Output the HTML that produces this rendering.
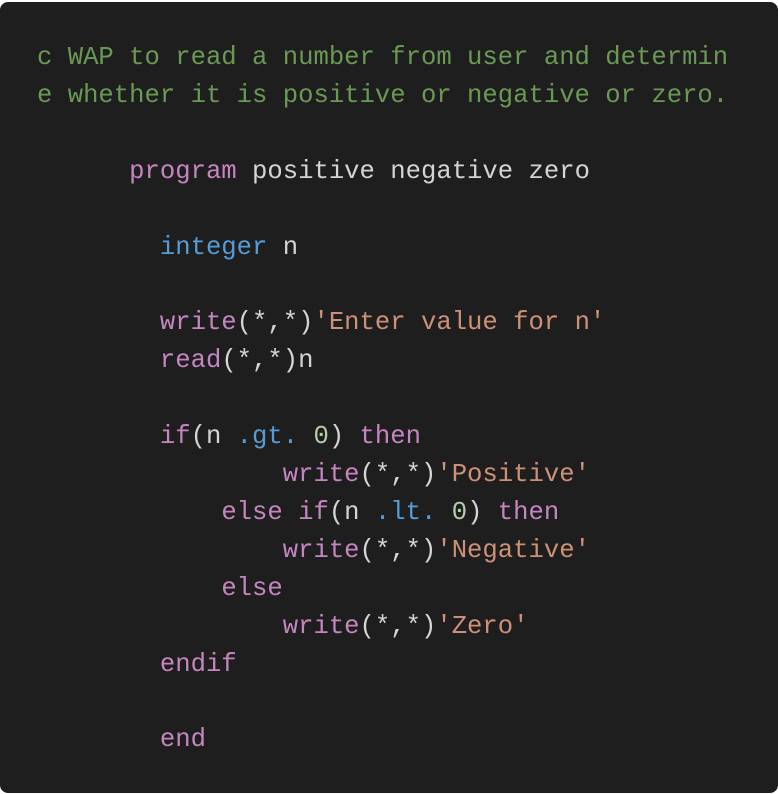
<!DOCTYPE html>
<html><head><style>
html,body{margin:0;padding:0;background:#fff;width:778px;height:794px;overflow:hidden}
.box{position:absolute;left:0;top:2px;width:778px;height:791px;background:#1e1e1e;border-radius:8px}
pre{position:absolute;left:37px;top:39px;margin:0;font-family:"Liberation Mono",monospace;font-size:25.6px;line-height:37.9px;color:#d4d4d4;white-space:pre}
.c{color:#6a9955}.k{color:#c586c0}.t{color:#569cd6}.s{color:#ce9178}.n{color:#b5cea8}
</style></head><body><div class="box"></div>
<pre><span class="c">c WAP to read a number from user and determin
e whether it is positive or negative or zero.</span>

      <span class="k">program</span> positive negative zero

        <span class="t">integer</span> n

        <span class="k">write</span>(*,*)<span class="s">'Enter value for n'</span>
        <span class="k">read</span>(*,*)n

        <span class="k">if</span>(n <span class="t">.gt.</span> <span class="n">0</span>) <span class="k">then</span>
                <span class="k">write</span>(*,*)<span class="s">'Positive'</span>
            <span class="k">else if</span>(n <span class="t">.lt.</span> <span class="n">0</span>) <span class="k">then</span>
                <span class="k">write</span>(*,*)<span class="s">'Negative'</span>
            <span class="k">else</span>
                <span class="k">write</span>(*,*)<span class="s">'Zero'</span>
        <span class="k">endif</span>

        <span class="k">end</span></pre>
</body></html>
